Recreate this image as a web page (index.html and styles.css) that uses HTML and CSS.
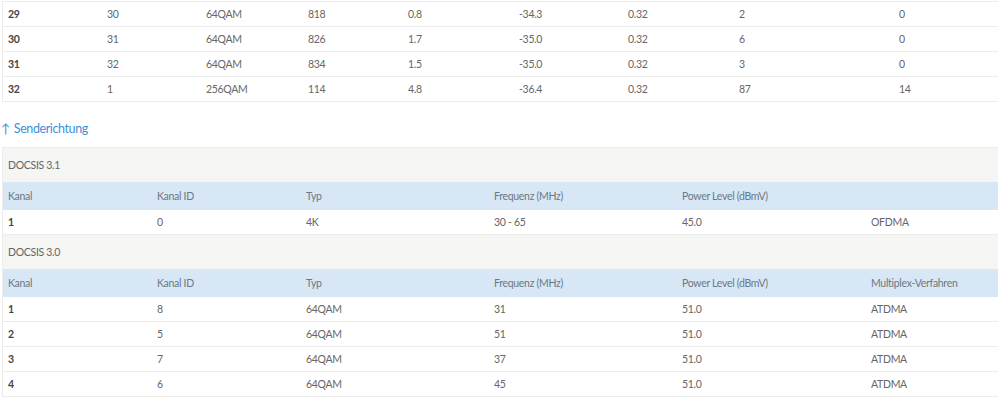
FILE: index.html
```html
<!DOCTYPE html>
<html lang="de">
<head>
<meta charset="utf-8">
<title>Kabelkanäle</title>
<link rel="stylesheet" href="styles.css">
</head>
<body>
<div class="page">
  <div class="tbl down">
    <div class="row"><span class="k">29</span><span>30</span><span>64QAM</span><span>818</span><span>0.8</span><span>-34.3</span><span>0.32</span><span>2</span><span>0</span><span></span></div>
    <div class="row"><span class="k">30</span><span>31</span><span>64QAM</span><span>826</span><span>1.7</span><span>-35.0</span><span>0.32</span><span>6</span><span>0</span><span></span></div>
    <div class="row"><span class="k">31</span><span>32</span><span>64QAM</span><span>834</span><span>1.5</span><span>-35.0</span><span>0.32</span><span>3</span><span>0</span><span></span></div>
    <div class="row"><span class="k">32</span><span>1</span><span>256QAM</span><span>114</span><span>4.8</span><span>-36.4</span><span>0.32</span><span>87</span><span>14</span><span></span></div>
  </div>

  <h2 class="heading"><span class="arrow">↑</span> Senderichtung</h2>

  <div class="tbl up">
    <div class="bar">DOCSIS 3.1</div>
    <div class="row head"><span>Kanal</span><span>Kanal ID</span><span>Typ</span><span>Frequenz (MHz)</span><span>Power Level (dBmV)</span><span></span></div>
    <div class="row"><span class="k">1</span><span>0</span><span>4K</span><span>30 - 65</span><span>45.0</span><span>OFDMA</span></div>
    <div class="bar">DOCSIS 3.0</div>
    <div class="row head"><span>Kanal</span><span>Kanal ID</span><span>Typ</span><span>Frequenz (MHz)</span><span>Power Level (dBmV)</span><span>Multiplex-Verfahren</span></div>
    <div class="row"><span class="k">1</span><span>8</span><span>64QAM</span><span>31</span><span>51.0</span><span>ATDMA</span></div>
    <div class="row"><span class="k">2</span><span>5</span><span>64QAM</span><span>51</span><span>51.0</span><span>ATDMA</span></div>
    <div class="row"><span class="k">3</span><span>7</span><span>64QAM</span><span>37</span><span>51.0</span><span>ATDMA</span></div>
    <div class="row"><span class="k">4</span><span>6</span><span>64QAM</span><span>45</span><span>51.0</span><span>ATDMA</span></div>
  </div>
</div>
</body>
</html>
```

FILE: styles.css
```css
html, body {
  margin: 0;
  padding: 0;
  background: #ffffff;
  overflow: hidden;
}
body {
  font-family: "Lato", "Liberation Sans", sans-serif;
  font-size: 10.5px;
  letter-spacing: -0.3px;
  color: #666666;
}
.page {
  padding: 1px 0 0 2px;
}
.tbl {
  border-left: 1px solid #ececec;
  border-top: 1px solid #ececec;
}
.row {
  display: grid;
  height: 24px;
  align-items: center;
  border-bottom: 1px solid #ececec;
}
.row > span {
  padding-left: 5px;
  white-space: nowrap;
}
.down .row {
  grid-template-columns: 99px 99px 102px 100px 111px 109px 111px 160px 104px 1fr;
}
.up .row {
  grid-template-columns: 149px 149px 188px 188px 189px 1fr;
}
.row .k {
  font-weight: 700;
  color: #444444;
}
.row.head {
  height: 28px;
  background: #d8e7f5;
  color: #6b7884;
  border-bottom: none;
}
.bar {
  height: 34px;
  display: flex;
  align-items: center;
  padding-left: 5px;
  background: #f5f5f3;
  color: #666666;
}
.heading {
  margin: 17px 0 8px 0;
  height: 20px;
  line-height: 20px;
  font-size: 12.5px;
  letter-spacing: -0.4px;
  font-weight: 400;
  color: #3d8fdb;
}
.arrow {
  margin-left: -1px;
  margin-right: 1px;
}
```
